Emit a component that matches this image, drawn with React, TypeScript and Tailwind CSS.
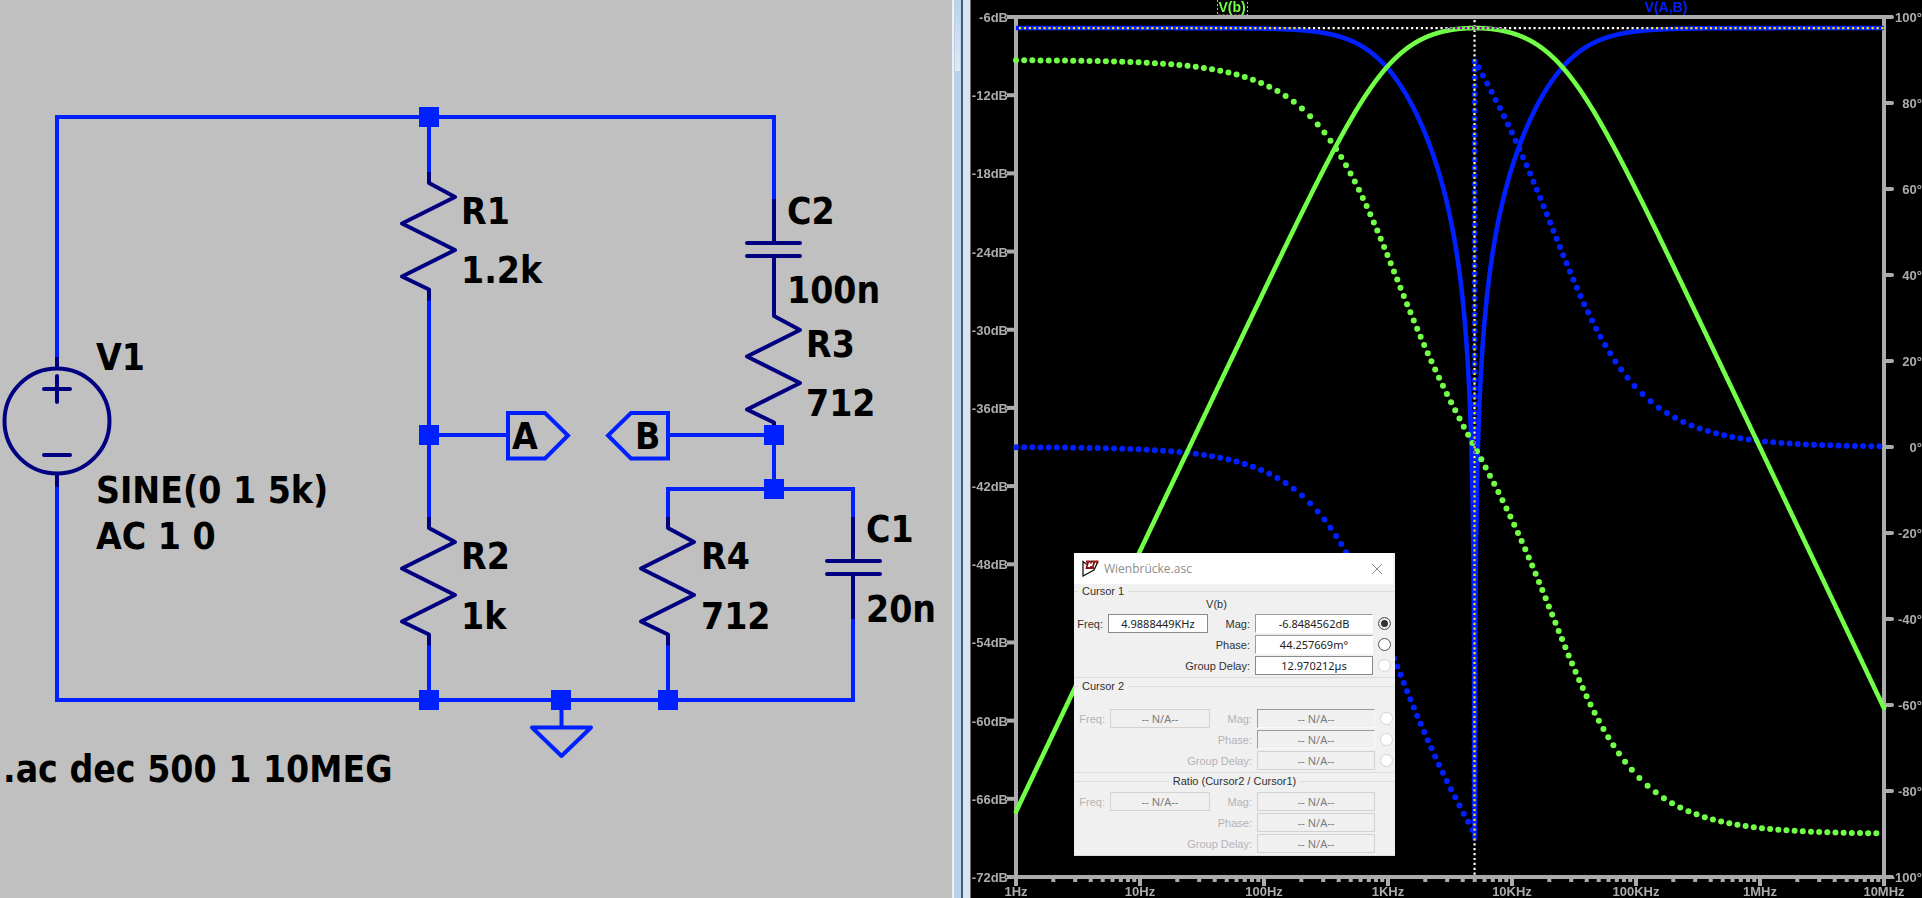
import React from "react";

const WIRE = "#0020ff";
const SYMBOL = "#000080";
const GREEN = "#72ff48";
const AXIS = "#acacac";

type Point = [number, number];

/* ---------- schematic ---------- */

const joints: Point[] = [
  [429, 117], [429, 435], [429, 700], [561, 700], [668, 700], [774, 435], [774, 489],
];

const labels: [number, number, string][] = [
  [96, 370, "V1"],
  [96, 503, "SINE(0 1 5k)"],
  [96, 549, "AC 1 0"],
  [461, 224, "R1"],
  [461, 283, "1.2k"],
  [461, 569, "R2"],
  [461, 629, "1k"],
  [787, 224, "C2"],
  [787, 303, "100n"],
  [806, 357, "R3"],
  [806, 416, "712"],
  [701, 569, "R4"],
  [701, 629, "712"],
  [866, 542, "C1"],
  [866, 622, "20n"],
  [3, 782, ".ac dec 500 1 10MEG"],
  [512, 449, "A"],
  [635, 449, "B"],
];

function Resistor({ x, y }: { x: number; y: number }) {
  return (
    <path
      d={`M${x} ${y - 11}v11l26 14l-53 26.5l53 26.5l-53 26.5l27 13v11`}
    />
  );
}

function Schematic() {
  return (
    <svg
      viewBox="0 0 952 898"
      preserveAspectRatio="xMinYMin meet"
      className="block h-full w-full"
      role="img"
      aria-label="Wien bridge circuit"
    >
      <g fill="none" stroke={WIRE} strokeWidth={4} strokeLinejoin="miter">
        <path d="M57 357V117H774V199" />
        <path d="M57 487V700H853V619" />
        <path d="M429 117V172M429 300V517M429 645V700" />
        <path d="M429 435H508M668 435H774V489" />
        <path d="M668 517V489H853V517M668 645V700M561.500 700V727" />
        <path d="M508 413H545L568 435.500L545 458.500H508Z" />
        <path d="M668 413H631L608 435.500L631 458.500H668Z" />
        <path d="M532 727.500H591L561.500 756Z" strokeLinejoin="round" />
      </g>
      <g fill="none" stroke={SYMBOL} strokeWidth={4} strokeLinecap="butt" strokeLinejoin="round">
        <circle cx={57} cy={421} r={52.5} />
        <path d="M57 357V369M57 474V487" />
        <path d="M44 389H70M57 376V402M44 455H70" strokeLinecap="round" />
        <Resistor x={429} y={183} />
        <Resistor x={429} y={528} />
        <Resistor x={774} y={316} />
        <Resistor x={668} y={528} />
        <path d="M774 199V243M774 256V306" />
        <path d="M853 517V561M853 574V619" />
        <path d="M747 243H800M747 256H800M827 561H880M827 574H880" strokeLinecap="round" />
      </g>
      <g fill={WIRE}>
        {joints.map(([x, y]) => (
          <rect key={`${x}-${y}`} x={x - 10} y={y - 10} width={20} height={20} />
        ))}
      </g>
      <g className="fill-black font-['DejaVu_Sans_Condensed','DejaVu_Sans',sans-serif] text-[37px] font-bold">
        {labels.map(([x, y, text]) => (
          <text key={`${x}-${y}`} x={x} y={y}>
            {text}
          </text>
        ))}
      </g>
    </svg>
  );
}

/* ---------- frequency response ---------- */

const LEFT = 45;
const RIGHT = 913;
const TOP = 17;
const BOTTOM = 877;
const DECADE = 124;

const dbToY = (db: number) => TOP + ((-6 - db) * 860) / 66;
const degToY = (deg: number) => TOP + (100 - deg) * 4.3;

function simulate() {
  const R = 712;
  const C1 = 20e-9;
  const C2 = 100e-9;
  const magB: Point[] = [];
  const phaseB: Point[] = [];
  const magAB: Point[] = [];
  const phaseAB: Point[] = [];
  for (let i = 0; i <= 3500; i++) {
    const exp = i / 500;
    const w = 2 * Math.PI * Math.pow(10, exp);
    const q = w * R * C1 - 1 / (w * R * C2);
    const d = 2.2 * 2.2 + q * q;
    const re = 2.2 / d;
    const im = -q / d;
    const dRe = 1 / 2.2 - re;
    const dIm = -im;
    const x = LEFT + exp * DECADE;
    const toDeg = 180 / Math.PI;
    magB.push([x, dbToY(20 * Math.log10(Math.hypot(re, im)))]);
    phaseB.push([x, degToY(Math.atan2(im, re) * toDeg)]);
    magAB.push([x, dbToY(20 * Math.log10(Math.hypot(dRe, dIm)))]);
    phaseAB.push([x, degToY(Math.atan2(dIm, dRe) * toDeg)]);
  }
  return { magB, phaseB, magAB, phaseAB };
}

const toPath = (pts: Point[]) =>
  "M" + pts.map(([x, y]) => `${x.toFixed(2)} ${y.toFixed(2)}`).join("L");

function spread(pts: Point[], step: number): Point[] {
  const out: Point[] = [pts[0]];
  let left = step;
  for (let i = 1; i < pts.length; i++) {
    const [x0, y0] = pts[i - 1];
    const [x1, y1] = pts[i];
    const len = Math.max(Math.abs(x1 - x0), Math.abs(y1 - y0));
    let at = left;
    while (at <= len) {
      const t = at / len;
      out.push([x0 + (x1 - x0) * t, y0 + (y1 - y0) * t]);
      at += step;
    }
    left = at - len;
  }
  return out;
}

const curves = simulate();
const dotsB = spread(curves.phaseB, 8.17);
const dotsAB = spread(curves.phaseAB, 8.17);
const CURSOR_X = LEFT + 3.698 * DECADE;
const CURSOR_Y = dbToY(-6.8484562);

const dbTicks = [-6, -12, -18, -24, -30, -36, -42, -48, -54, -60, -66, -72];
const degTicks = [100, 80, 60, 40, 20, 0, -20, -40, -60, -80, -100];
const freqTicks = ["1Hz", "10Hz", "100Hz", "1KHz", "10KHz", "100KHz", "1MHz", "10MHz"];

function Plot() {
  const minor: string[] = [];
  for (let d = 0; d < 7; d++) {
    for (let m = 2; m < 10; m++) {
      minor.push(`M${(LEFT + (d + Math.log10(m)) * DECADE).toFixed(1)} ${BOTTOM}v5`);
    }
  }
  return (
    <svg
      viewBox="0 0 951 898"
      preserveAspectRatio="xMinYMin meet"
      className="isolate block h-full w-full bg-black"
      role="img"
      aria-label="Frequency response of V(b) and V(A,B)"
    >
      <g fill="none" stroke={AXIS} strokeWidth={4}>
        <rect x={LEFT} y={TOP} width={RIGHT - LEFT} height={BOTTOM - TOP} />
        {dbTicks.map((db) => (
          <path key={db} d={`M${LEFT - 9} ${dbToY(db)}H${LEFT}`} />
        ))}
        {degTicks.map((deg) => (
          <path key={deg} d={`M${RIGHT} ${degToY(deg)}h8`} strokeLinecap="round" />
        ))}
        {freqTicks.map((f, i) => (
          <path key={f} d={`M${LEFT + i * DECADE} ${BOTTOM}v9`} />
        ))}
        <path d={minor.join("")} />
      </g>
      <g
        fill={AXIS}
        className="font-['Liberation_Sans',Arial,sans-serif] text-[13px] font-bold"
      >
        {dbTicks.map((db) => (
          <text key={db} x={37} y={Math.round(dbToY(db)) + 5} textAnchor="end">
            {db}dB
          </text>
        ))}
        {degTicks.map((deg) => (
          <text key={deg} x={951} y={degToY(deg) + 5} textAnchor="end">
            {deg}°
          </text>
        ))}
        {freqTicks.map((f, i) => (
          <text key={f} x={LEFT + i * DECADE} y={896} textAnchor="middle">
            {f}
          </text>
        ))}
      </g>
      <g
        textAnchor="middle"
        className="font-['Liberation_Sans',Arial,sans-serif] text-[14px] font-bold"
      >
        <text x={261} y={12} fill={GREEN}>
          V(b)
        </text>
        <text x={695} y={12} fill={WIRE}>
          V(A,B)
        </text>
      </g>
      <path
        d="M246.500 0V15H276.500V0"
        fill="none"
        stroke="#b0b0b0"
        strokeDasharray="2 2"
      />
      <path d={toPath(curves.magAB)} fill="none" stroke={WIRE} strokeWidth={4.6} strokeLinejoin="round" />
      <g fill={WIRE}>
        {dotsAB.map(([x, y], i) => (
          <circle key={i} cx={x} cy={y} r={3} />
        ))}
      </g>
      <path d={toPath(curves.magB)} fill="none" stroke={GREEN} strokeWidth={4.6} strokeLinejoin="round" strokeLinecap="round" />
      <g fill={GREEN}>
        {dotsB.map(([x, y], i) => (
          <circle key={i} cx={x} cy={y} r={3} />
        ))}
      </g>
      <path
        d={`M${LEFT + 3} ${CURSOR_Y}H${RIGHT}M${CURSOR_X} ${TOP + 3}V${BOTTOM - 2}`}
        fill="none"
        stroke="white"
        strokeWidth={2.2}
        strokeDasharray="2.2 2.7"
        className="mix-blend-difference"
      />
    </svg>
  );
}

/* ---------- cursor read-out ---------- */

type FieldProps = { id: string; label: string; value: string; off?: boolean; frame?: string };

function Field({ id, label, value, off, frame }: FieldProps) {
  return (
    <>
      <label
        htmlFor={id}
        className={`text-right whitespace-nowrap ${off ? "text-[#b4b4b4]" : "text-[#303030]"}`}
      >
        {label}
      </label>
      <input
        id={id}
        readOnly
        disabled={off}
        defaultValue={value}
        className={`block h-[19px] w-full min-w-0 rounded-none border text-center font-['Noto_Sans','Open_Sans',sans-serif] text-[11px] leading-4 ${
          off ? "bg-[#f0f0f0] text-[#7c7c7c]" : "bg-white text-[#202020]"
        } ${frame ?? (off ? "border-[#d2d2d2]" : "border-[#8a8a8a]")}`}
      />
    </>
  );
}

function Mark({ label, checked, dim }: { label: string; checked?: boolean; dim?: boolean }) {
  return (
    <input
      type="radio"
      name="trace"
      aria-label={label}
      defaultChecked={checked}
      disabled={dim}
      className={`block size-[13px] appearance-none rounded-full border bg-white bg-clip-padding checked:bg-[#333] checked:shadow-[inset_0_0_0_2px_#f4f4f4] ${
        dim ? "border-[#d6d6d6]" : "border-[#555]"
      }`}
    />
  );
}

type GroupProps = {
  id: string;
  title: string;
  centered?: boolean;
  trace?: string;
  values: [string, string, string, string];
  off?: boolean;
  marks?: boolean;
};

function Group({ id, title, centered, trace, values, off, marks }: GroupProps) {
  const sunken = off
    ? "border-t-[#9a9a9a] border-l-[#9a9a9a] border-r-[#fafafa] border-b-[#fafafa]"
    : "border-t-[#9a9a9a] border-l-[#9a9a9a] border-r-white border-b-white";
  const frame = marks ? sunken : undefined;
  return (
    <section aria-label={title}>
      <div className="flex h-[14px] items-center">
        <span className={`h-px bg-[#dcdcdc] ${centered ? "flex-1" : "w-1"}`} />
        <h2 className="px-1 font-medium text-[#303030]">{title}</h2>
        <span className="h-px flex-1 bg-[#dcdcdc]" />
      </div>
      {marks && <p className="h-3 pr-9 text-center leading-3 text-[#303030]">{trace}</p>}
      <div
        className={`grid grid-cols-[29px_100px_37px_118px_13px] items-center gap-x-[5px] gap-y-[2px] pt-1 pb-[2px] ${
          off ? "pl-[2px]" : ""
        }`}
      >
        <Field id={`${id}-freq`} label="Freq:" value={values[0]} off={off} />
        <Field id={`${id}-mag`} label="Mag:" value={values[1]} off={off} frame={frame} />
        {marks ? <Mark label={`${title} magnitude`} checked={!off} dim={off} /> : <span />}
        <span className="col-span-2" />
        <Field id={`${id}-phase`} label="Phase:" value={values[2]} off={off} frame={frame} />
        {marks ? <Mark label={`${title} phase`} dim={off} /> : <span />}
        <span />
        <div className="col-span-3 grid grid-cols-[142px_118px] items-center gap-x-[5px]">
          <Field id={`${id}-delay`} label="Group Delay:" value={values[3]} off={off} />
        </div>
        {marks ? <Mark label={`${title} group delay`} dim /> : <span />}
      </div>
      <div className="h-px bg-[#dcdcdc]" />
    </section>
  );
}

function CursorDialog() {
  return (
    <div
      role="dialog"
      aria-label="Wienbrücke.asc"
      className="absolute top-[553px] left-[103px] w-[321px] bg-[#f0f0f0] font-['Liberation_Sans',Arial,sans-serif] text-[11px] leading-[14px]"
    >
      <header className="mr-[2px] flex h-[31px] items-center bg-white pr-[10px] pl-2">
        <svg viewBox="0 0 17 17" className="size-[17px]" aria-hidden="true">
          <path d="M5 4.500L1 1.500V16L12 10L16 1.500" fill="none" stroke="#111" strokeWidth={1.3} />
          <path d="M4 1.500H8M6.200 1.500L4.500 8H9V6M9 3.500V1.500H15.500L15 4M12.500 1.500L10.500 8M9.500 8H12" fill="none" stroke="#8b1414" strokeWidth={1.8} />
        </svg>
        <h1 className="ml-[5px] flex-1 font-['Open_Sans','Noto_Sans',sans-serif] text-[12px] text-[#8c8c8c]">
          Wienbrücke.asc
        </h1>
        <button type="button" aria-label="Close">
          <svg viewBox="0 0 12 12" className="size-3" aria-hidden="true">
            <path d="M1 1L11 11M11 1L1 11" stroke="#8c8c8c" fill="none" />
          </svg>
        </button>
      </header>
      <div className="flex flex-col gap-px">
        <Group id="c1" title="Cursor 1" trace="V(b)" marks values={["4.9888449KHz", "-6.8484562dB", "44.257669m°", "12.970212µs"]} />
        <Group id="c2" title="Cursor 2" trace="" marks off values={["-- N/A--", "-- N/A--", "-- N/A--", "-- N/A--"]} />
        <Group id="ratio" title="Ratio (Cursor2 / Cursor1)" centered off values={["-- N/A--", "-- N/A--", "-- N/A--", "-- N/A--"]} />
      </div>
    </div>
  );
}

export default function App() {
  return (
    <main className="flex h-screen overflow-hidden bg-black">
      <section className="min-w-0 flex-[952_1_0%] bg-[#c0c0c0]">
        <Schematic />
      </section>
      <div className="flex w-[19px] shrink-0" aria-hidden="true">
        <div className="w-[2px] bg-[#eef0f2]" />
        <div className="w-[7px] bg-[#b9d1ea]">
          <div className="ml-px h-[71px] w-[5px] bg-linear-to-b from-[#b9d1ea] to-[#dfeaf6]" />
        </div>
        <div className="w-[2px] bg-[#3f5f6c]" />
        <div className="w-[7px] bg-[#d9e4f1]" />
        <div className="w-px bg-[#707070]" />
      </div>
      <section className="relative min-w-0 flex-[951_1_0%]">
        <Plot />
        <CursorDialog />
      </section>
    </main>
  );
}
